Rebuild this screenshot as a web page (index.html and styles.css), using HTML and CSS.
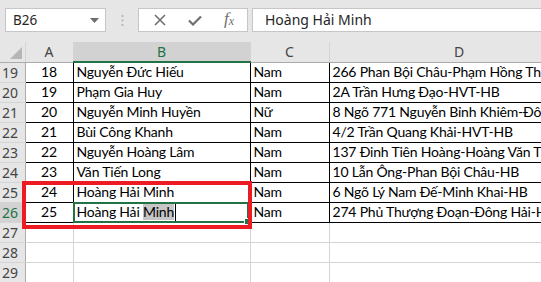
FILE: index.html
```html
<html>
<head>
<meta charset="utf-8">
<title>B26</title>
<link rel="stylesheet" href="styles.css">
</head>

<body>
<div class="app">

<div class="fbar">
	<div class="namebox">
		<span>B26</span>
		<svg class="drop" width="9" height="5" viewBox="0 0 9 5"><path d="M0 0h9L4.5 5z" fill="#6d6d6d"/></svg>
	</div>
	<svg class="grip" width="3" height="11" viewBox="0 0 3 11"><rect x="0.5" y="0" width="2" height="2" fill="#b9b9b9"/><rect x="0.5" y="4.5" width="2" height="2" fill="#b9b9b9"/><rect x="0.5" y="9" width="2" height="2" fill="#b9b9b9"/></svg>
	<div class="fbuttons">
		<svg width="12" height="12" viewBox="0 0 12 12"><path d="M1 1L11 11M11 1L1 11" stroke="#6f6f6f" stroke-width="1.6"/></svg>
		<svg width="14" height="11" viewBox="0 0 14 11"><path d="M1 5.5L5 9.5L13 1.5" stroke="#6f6f6f" stroke-width="2.2" fill="none"/></svg>
		<span class="fx">f<sub>x</sub></span>
	</div>
	<div class="finput">Hoàng Hải Minh</div>
</div>

<div class="sheet">
<table class="grid">
<colgroup>
	<col class="w-rh"><col class="w-a"><col class="w-b"><col class="w-c"><col class="w-d">
</colgroup>
<thead>
<tr>
	<th class="corner"><svg class="tri" width="12" height="12" viewBox="0 0 12 12"><path d="M12 0V12H0z" fill="#b6b6b6"/></svg></th>
	<th>A</th><th class="hsel">B</th><th>C</th><th>D</th>
</tr>
</thead>
<tbody>
<tr><th>19</th><td class="num">18</td><td>Nguyễn Đức Hiếu</td><td>Nam</td><td>266 Phan Bội Châu-Phạm Hồng Thái-HB</td></tr>
<tr><th>20</th><td class="num">19</td><td>Phạm Gia Huy</td><td>Nam</td><td>2A Trần Hưng Đạo-HVT-HB</td></tr>
<tr><th>21</th><td class="num">20</td><td>Nguyễn Minh Huyền</td><td>Nữ</td><td>8 Ngõ 771 Nguyễn Bỉnh Khiêm-Đông Hải-HB</td></tr>
<tr><th>22</th><td class="num">21</td><td>Bùi Công Khanh</td><td>Nam</td><td>4/2 Trần Quang Khải-HVT-HB</td></tr>
<tr><th>23</th><td class="num">22</td><td>Nguyễn Hoàng Lâm</td><td>Nam</td><td>137 Đinh Tiên Hoàng-Hoàng Văn Thụ-HB</td></tr>
<tr><th>24</th><td class="num">23</td><td>Văn Tiến Long</td><td>Nam</td><td>10 Lẫn Ông-Phan Bội Châu-HB</td></tr>
<tr><th>25</th><td class="num">24</td><td>Hoàng Hải Minh</td><td>Nam</td><td>6 Ngõ Lý Nam Đế-Minh Khai-HB</td></tr>
<tr><th class="rsel">26</th><td class="num">25</td><td class="active"><div class="selbox"></div><div class="handle"></div>Hoàng Hải <span class="mark">Minh</span><span class="caret"></span></td><td>Nam</td><td>274 Phủ Thượng Đoạn-Đông Hải-HA</td></tr>
<tr class="empty"><th>27</th><td></td><td></td><td></td><td></td></tr>
<tr class="empty"><th>28</th><td></td><td></td><td></td><td></td></tr>
<tr class="empty"><th>29</th><td></td><td></td><td></td><td></td></tr>
</tbody>
</table>
<div class="callout"></div>
</div>

</div>
</body>
</html>
```

FILE: styles.css
```css
body {
	margin: 0;
	background: #ffffff;
}
.app {
	width: 541px;
	height: 282px;
	overflow: hidden;
	background: #e6e6e6;
}

/* formula bar */
.fbar {
	display: flex;
	align-items: center;
	height: 42px;
	padding: 0 0 0 5px;
	box-sizing: border-box;
	font-family: "Noto Sans", sans-serif;
	font-size: 13.5px;
	color: #262626;
}
.namebox {
	display: flex;
	align-items: center;
	justify-content: space-between;
	width: 101px;
	height: 24px;
	box-sizing: border-box;
	border: 1px solid #c6c6c6;
	background: #fff;
	padding: 0 6px 0 7px;
	margin-top: -2px;
}
.grip { margin: -2px 0 0 15px; }
.fbuttons {
	display: flex;
	align-items: center;
	justify-content: space-around;
	width: 110px;
	height: 24px;
	box-sizing: border-box;
	margin: -2px 0 0 14px;
	padding: 0 2px 0 4px;
	border: 1px solid #c6c6c6;
	background: #fff;
}
.fx {
	font-family: "Liberation Serif", serif;
	font-style: italic;
	font-size: 17px;
	line-height: 17px;
	color: #6f6f6f;
}
.fx sub { font-size: 12px; vertical-align: -1px; }
.finput {
	flex: 1;
	height: 24px;
	line-height: 22px;
	box-sizing: border-box;
	margin: -2px 0 0 4px;
	padding-left: 12px;
	border: 1px solid #c6c6c6;
	border-right: none;
	background: #fff;
	font-size: 14px;
}

/* sheet */
.sheet {
	position: relative;
	background: #fff;
	height: 240px;
}
.grid {
	border-collapse: collapse;
	table-layout: fixed;
	width: 589px;
	font-family: "Lato", sans-serif;
	font-size: 14px;
	letter-spacing: -0.2px;
	color: #000;
	white-space: nowrap;
}
.w-rh { width: 25px; }
.w-a { width: 48px; }
.w-b { width: 177px; }
.w-c { width: 79px; }
.w-d { width: 260px; }
.grid tr { height: 20px; }
.grid th {
	background: #e6e6e6;
	font-family: "Noto Sans", sans-serif;
	font-weight: normal;
	font-size: 14px;
	letter-spacing: 0;
	color: #444;
	border: 1px solid #d4d4d4;
	padding: 0;
}
.grid thead th {
	border-top: none;
	border-bottom: 1px solid #ababab;
	height: 19px;
}
.grid tbody th {
	border-right: 1px solid #ababab;
	border-left: none;
	text-align: left;
	padding-left: 2px;
}
.grid thead th.corner {
	position: relative;
	border-left: none;
}
.tri {
	position: absolute;
	right: 3px;
	bottom: 3px;
}
.grid thead th.hsel {
	background: #d2d2d2;
	color: #217346;
	border-bottom: 2px solid #217346;
}
.grid tbody th.rsel {
	background: #d2d2d2;
	color: #217346;
}
.grid td {
	border: 1px solid #000;
	padding: 0 0 0 3px;
	overflow: hidden;
	line-height: 18px;
}
.grid td.num {
	text-align: center;
	padding: 0;
}
.grid tr.empty td {
	border: 1px solid #d4d4d4;
}
.grid tr.empty th { border-bottom: 1px solid #d4d4d4; }

/* active cell in edit mode */
.grid td.active {
	position: relative;
	overflow: visible;
}
.selbox {
	position: absolute;
	left: -1px;
	top: -1px;
	right: 1px;
	bottom: -1px;
	border: 2px solid #217346;
}
.handle {
	position: absolute;
	right: -1px;
	bottom: -3px;
	width: 5px;
	height: 5px;
	background: #217346;
	border: 1px solid #fff;
}
.mark { background: #c6c6c6; }
.caret {
	display: inline-block;
	width: 1px;
	height: 17px;
	margin-left: 1px;
	vertical-align: -4px;
	background: #000;
}

/* red annotation */
.callout {
	position: absolute;
	left: 22px;
	top: 139px;
	width: 222px;
	height: 40px;
	border: 4px solid #ed1c24;
}
```
